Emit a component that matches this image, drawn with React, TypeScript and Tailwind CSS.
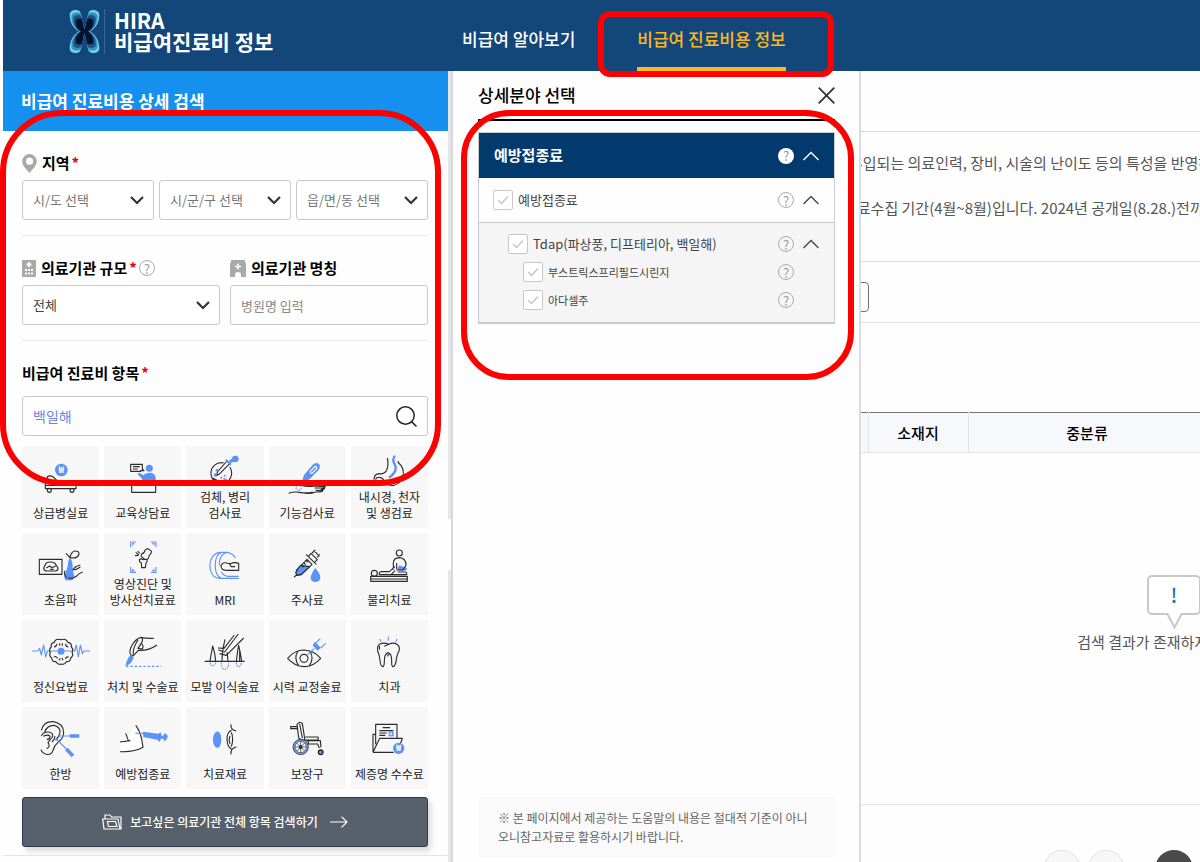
import React from "react";

const INK = "#2b2b2b";
const BLUE = "#5c93f7";

type Category = { name: string[]; viewBox: string; art: React.ReactNode };

const categories: Category[] = [
  {
    name: ["상급병실료"],
    viewBox: "88 48 192 96",
    art: (
      <>
        <circle cx="185" cy="72" r="19" fill={BLUE} stroke="none" />
        <text x="185" y="82" textAnchor="middle" fontSize="28" fontWeight="700" fill="#fff" stroke="none">₩</text>
        <path d="M143 108V92q8-5 18 1l14 14M137 108v20h92v-10H139M137 118h90M229 112v16" />
        <circle cx="149" cy="133" r="6" />
        <circle cx="217" cy="133" r="6" />
      </>
    ),
  },
  {
    name: ["교육상담료"],
    viewBox: "332 48 192 96",
    art: (
      <>
        <path d="M391 55h35v14l5 5h-10v2h-30zM398 62h20M398 69h14" />
        <circle cx="447" cy="67" r="10.5" fill={BLUE} stroke="none" />
        <path d="M411 84l6-4 12 8q6-8 20-8 17 0 17 18v8h-40l-2-9z" fill={BLUE} stroke="none" />
        <path d="M394 104h72v35h-72z" />
      </>
    ),
  },
  {
    name: ["검체, 병리", "검사료"],
    viewBox: "-80 30 192 96",
    art: (
      <>
        <path d="M12 54A31 31 0 1 0 30 66M-20 100q20 14 42 4" />
        <path d="M-10 92l4-12L22 48l8 8L0 86z" fill="#fff" />
        <path d="M18 44l16 15" strokeWidth="5" stroke={BLUE} />
        <path d="M30 50L48 41" stroke={BLUE} strokeWidth="10" />
        <circle cx="47" cy="42" r="10" fill={BLUE} stroke="none" />
        <g fill={BLUE} stroke="none">
          <circle cx="-8" cy="76" r="4" /><circle cx="-13" cy="90" r="5" /><circle cx="5" cy="98" r="3" /><circle cx="15" cy="92" r="3" /><circle cx="14" cy="102" r="3" />
        </g>
      </>
    ),
  },
  {
    name: ["기능검사료"],
    viewBox: "166 48 192 96",
    art: (
      <>
        <path d="M247 105l6-18 26-31q10-9 19-2 6 8-1 18l-29 29z" fill={BLUE} stroke="none" />
        <path d="M272 76l14-15q6 0 5 6l-14 15q-6 0-5-6z" stroke="#fff" />
        <path d="M207 142q16-6 32-3 24 4 40-1M244 118q18 6 38 2l35 2q-4 6-12 5M285 126h30q0 5-12 5M288 133l22 1q-4 5-22 4-18 7-34 3" />
        <circle cx="237" cy="125" r="8" stroke={BLUE} strokeDasharray="4 3" />
      </>
    ),
  },
  {
    name: ["내시경, 천자", "및 생검료"],
    viewBox: "412 30 192 96",
    art: (
      <>
        <path d="M503 39q5 20-2 37-9 13-24 10-14 2-14 18M468 104q2-8 10-7 10 0 15 10 12 17 29 14 24-6 29-31 2-23-14-36l-2-6" />
        <path d="M526 32q-9 12-2 24 8 14 0 26-5 9-16 16" stroke={BLUE} strokeWidth="7" />
        <path d="M530 76l-18 20" stroke={BLUE} strokeWidth="4" />
      </>
    ),
  },
  {
    name: ["초음파"],
    viewBox: "88 309 192 96",
    art: (
      <>
        <path d="M119 340h68v45h-68zM139 352q13-8 27 0l9 14q0 9-9 9h-24q-9 0-10-8zM140 366l10-6 6 5 12-5M152 370h10" />
        <path d="M211 335q-6 6-7 26l-10 32 3 10h22l4-13-4-24q0-23-8-31z" fill={BLUE} stroke="none" />
        <path d="M199 322l12 13q2-16 14-20 13-1 13 9-3 12-18 12-5 0-9-1M242 357q-18 5-22 14 10 1 22-8M249 378q-12 4-18 12-13 10-25 5M196 374q-4 12 4 21" />
      </>
    ),
  },
  {
    name: ["영상진단 및", "방사선치료료"],
    viewBox: "332 291 192 96",
    art: (
      <>
        <path d="M391 307v-16h16M452 291h15v16M391 366v16h16M452 382h15v-16M397 301v-5h5M461 301v-5h-5M397 372v5h5M461 372v5h-5" stroke={BLUE} />
        <path d="M425 326q7-1 9-10 6-8 10-4l4 3q7 2 5 8-8 9-9 17-5 6-12 2l-9-7q-1-6 2-9zM417 344q5-5 10 0 8-3 13 1 2 5-3 9l-2 14h-11l-1-14q-7-4-6-10zM406 322l9 7M404 332l11-1M412 318l6 7" />
      </>
    ),
  },
  {
    name: ["MRI"],
    viewBox: "-80 309 192 96",
    art: (
      <>
        <path d="M24 319H4C-40 319-40 397 0 397h57M24 319q17 4 23 17M5 319C-19 326-20 388 5 397M24 319C0 322-3 350 0 359M5 378q7 13 21 13h31" stroke={BLUE} />
        <path d="M57 352l-9-2q-7-1-15 3l-8-1q-17-6-21 8 1 13 15 13h38zM29 354l6 8h11" />
      </>
    ),
  },
  {
    name: ["주사료"],
    viewBox: "166 309 192 96",
    art: (
      <>
        <path d="M223 394l10-10M230 373l32-33 15 15-32 31-14 2zM259 325l31 30M266 332l8-10 19 19-9 9M282 313l18 18M277 321l10-9M292 334l8-9" />
        <path d="M236 366l7-8 27 4-25 23-13 2-4-7z" fill={BLUE} stroke={INK} />
        <path d="M246 359l5 5M253 351l5 5M260 344l5 5" />
        <path d="M287 366q16 20 15 29-2 13-15 13-14-1-14-13 1-11 14-29z" fill={BLUE} stroke="none" />
      </>
    ),
  },
  {
    name: ["물리치료"],
    viewBox: "412 309 192 96",
    art: (
      <>
        <circle cx="539" cy="321" r="9" />
        <circle cx="464" cy="382" r="9" />
        <path d="M538 358l22 7q5 7-4 9l-23-2z" fill={BLUE} stroke="none" />
        <path d="M453 391h110v15H453zM453 399h110M479 386q-2-8 6-9h24l17-15M526 374l-12 12M479 386h82q2-6-5-8h-22M521 371V350q1-14 18-15 20 1 20 23l-9 14h-20M531 351v18" />
      </>
    ),
  },
  {
    name: ["정신요법료"],
    viewBox: "88 60 192 96",
    art: (
      <>
        <path d="M97 105h18l5-8 5 20 7-30 6 36 5-18h82l5-18 6 36 6-36 6 26 5-8h18" stroke={BLUE} />
        <path d="M184 71q-17-5-20 8-12 2-9 14-9 8-3 16-5 12 4 17 1 12 13 11 6 11 15 7 10 4 16-7 13 1 13-11 10-7 4-17 6-8-2-16 2-12-10-14-5-13-21-8zM163 93q7-1 9-9M197 84q2 8 9 9M163 123q6-4 11 4M197 128q4-7 10-5M180 82v7M188 82v7M178 133l4-6M190 133l-3-7" />
        <circle cx="184" cy="106" r="10.5" fill={BLUE} stroke="none" />
      </>
    ),
  },
  {
    name: ["처치 및 수술료"],
    viewBox: "332 60 192 96",
    art: (
      <>
        <path d="M460 67q-26 0-38-3-15 3-27 24-9 16-5 26 7 10 15-1l9-10q30 2 56-16M422 64q8 5 2 16l-11 17 13 2q5-11-3-17M413 72q-16 24-14 43" />
        <path d="M390 116l10 6q-4 18-16 24l-8 5q0-15 14-35z" fill={BLUE} stroke="none" />
        <path d="M377 151h106" stroke={BLUE} strokeDasharray="7 6" />
      </>
    ),
  },
  {
    name: ["모발 이식술료"],
    viewBox: "-80 60 192 96",
    art: (
      <>
        <path d="M-45 136H75M-29 136q3-20 8-46 8 25 9 46M7 136q0-30 9-66M25 136q-1-14-3-27M-4 102l19 6L56 54M0 113l20 5L72 66M-5 96l18 1L44 57M50 136q3-28 7-48 6 24 9 48M60 104v31" />
        <path d="M-29 140q1 9 8 9t9-9M5 140q0 20 10 20 12 0 12-20M50 140q1 12 7 12t8-12" stroke={BLUE} strokeDasharray="5 3" />
      </>
    ),
  },
  {
    name: ["시력 교정술료"],
    viewBox: "166 60 192 96",
    art: (
      <>
        <path d="M204 127q21-25 49-25 30 1 50 25-22 25-50 25-28-1-49-25zM235 105q-14 22 2 44M270 105q15 21-1 44" />
        <circle cx="253" cy="127" r="12" />
        <path d="M264 116l20-19" stroke={BLUE} />
        <path d="M281 88l5-8 15 15-7 7z" fill={BLUE} stroke={BLUE} />
        <path d="M287 82l15-14M303 96l15-14" stroke={BLUE} />
      </>
    ),
  },
  {
    name: ["치과"],
    viewBox: "412 60 192 96",
    art: (
      <>
        <path d="M481 84q12-6 26 1 14-7 25 0 10 7 6 20-7 12-9 33-4 15-10 14-4-4-3-16 0-23-9-26-13 2-13 25 0 15-4 17-8-1-9-19-2-16-7-28-3-16 7-21zM494 91l13-6M480 90q-2 6 0 11M504 121q2-8 7-6" />
        <path d="M480 69l4 8M506 62v12M532 69l-4 8" stroke={BLUE} />
      </>
    ),
  },
  {
    name: ["한방"],
    viewBox: "88 321 192 96",
    art: (
      <>
        <path d="M125 343q7-28 36-26 31 5 31 34-1 17-17 28-11 9-15 24-5 15-20 12-14-5-16-14M135 347q9-20 28-19 20 5 18 22-2 11-13 22M125 360q6-13 21-12 17 2 12 15l-13 17q9 12-4 18M131 361q16-7 20 0-1 9-9 10M166 360q-1 12-9 18" />
        <circle cx="179" cy="360" r="3.5" fill={BLUE} stroke="none" />
        <circle cx="171" cy="370" r="3.5" fill={BLUE} stroke="none" />
        <path d="M179 360h34M171 370l29 29" stroke={BLUE} />
        <path d="M210 360h29M200 399l20 21" stroke={BLUE} strokeWidth="11" strokeLinecap="butt" />
      </>
    ),
  },
  {
    name: ["예방접종료"],
    viewBox: "332 321 192 96",
    art: (
      <>
        <path d="M406 328q12 15 18 41l4 27q-22 12-67 12l-2-30 17-4z" fill="#fff" stroke="none" />
        <path d="M406 328q12 15 18 41l4 25q-26 15-68 13M359 378l31-4M376 352l8 21" />
        <path d="M405 352h24" stroke={BLUE} />
        <path d="M428 347l45 6 8-4 3 10h5l3-7q10 2 10 11-2 9-10 13l-3-8h-7l-4 10-7-7-42-8z" fill={BLUE} stroke="none" />
      </>
    ),
  },
  {
    name: ["치료재료"],
    viewBox: "-80 321 192 96",
    art: (
      <>
        <path d="M-7 346q12 3 12 25-1 22-12 25-13-5-13-25t13-25z" fill={BLUE} stroke="none" />
        <path d="M34 325q-2 17 16 20M34 415q-2-18 16-22M36 342q-15 7-14 29 1 21 14 29M35 349q8 20 0 43M31 360q-5 11 0 23" />
      </>
    ),
  },
  {
    name: ["보장구"],
    viewBox: "166 321 192 96",
    art: (
      <>
        <path d="M213 332h20v6h-20zM232 325l7-6 9 3 7 46q0 6-9 4l-9-6zM240 324l8 42M257 363h37q5 5-2 9h-40M259 374h43l2 20M266 384h28l5 12M266 374v12" />
        <circle cx="243" cy="393" r="21" stroke={BLUE} strokeWidth="5" />
        <circle cx="243" cy="393" r="23" strokeWidth="2" />
        <circle cx="243" cy="393" r="17" strokeWidth="2" />
        <circle cx="243" cy="393" r="4" />
        <path d="M243 376v34M226 393h34M231 381l24 24M255 381l-24 24" strokeWidth="2" />
        <circle cx="303" cy="409" r="7" fill={BLUE} strokeWidth="4" />
      </>
    ),
  },
  {
    name: ["제증명 수수료"],
    viewBox: "412 321 192 96",
    art: (
      <>
        <path d="M468 385V325h64v42M460 409V355h8M460 409l20-42h68l-7 20M460 409h62M489 335h22M479 344h42M479 351h22M479 358h18" />
        <rect x="507" y="347" width="15" height="14" fill={BLUE} stroke="none" />
        <path d="M514 350v8M510 354h8" stroke="#fff" />
        <circle cx="537" cy="397" r="17" fill={BLUE} stroke="none" />
        <text x="537" y="406" textAnchor="middle" fontSize="26" fontWeight="700" fill="#fff" stroke="none">₩</text>
      </>
    ),
  },
];

function Logo() {
  const lobe = "M255 101C226 94 210 72 210 44C210 28 234 26 241 34C247 44 247 70 257 90Z";
  const layers: [string, number][] = [
    ["#7ccbf0", 1],
    ["#2d94c4", 0.88],
    ["#18557f", 0.76],
    ["#04122f", 0.6],
  ];
  return (
    <svg viewBox="208 28 94 134" className="h-[45px] w-[31px]" aria-hidden="true">
      {layers.map(([fill, k]) => (
        <g key={fill} fill={fill}>
          {[[1, 1], [-1, 1], [1, -1], [-1, -1]].map(([sx, sy]) => (
            <path key={`${sx}${sy}`} d={lobe} transform={`translate(255 95) scale(${sx * k} ${sy * k}) translate(-255 -95)`} />
          ))}
        </g>
      ))}
    </svg>
  );
}

function Chevron({ up = false, className = "" }: { up?: boolean; className?: string }) {
  return (
    <svg viewBox="0 0 16 10" className={className} fill="none" stroke="currentColor" aria-hidden="true">
      <path d={up ? "M0.5 9L8 1.5L15.5 9" : "M2 2l6 6 6-6"} strokeWidth={up ? 1.3 : 2.2} />
    </svg>
  );
}

function Help({ solid = false }: { solid?: boolean }) {
  return (
    <button
      type="button"
      aria-label="도움말"
      className={
        solid
          ? "flex size-4 shrink-0 items-center justify-center rounded-full bg-white text-[13px] leading-none text-[#8a98a8]"
          : "flex size-4 shrink-0 items-center justify-center rounded-full border border-[#aaaaaa] text-[13px] leading-none text-[#999999]"
      }
    >
      ?
    </button>
  );
}

function Required() {
  return <span className="ml-0.5 text-[#e60012]">*</span>;
}

function SelectBox({ label, text, id, dark = false }: { label?: string; text: string; id?: string; dark?: boolean }) {
  return (
    <div className="relative flex-1">
      <select
        id={id}
        aria-label={label}
        className={`h-10 w-full appearance-none rounded-[3px] border border-[#c9c9c9] bg-white pl-2.5 text-[13px] ${dark ? "text-[#444444]" : "text-[#777777]"}`}
      >
        <option>{text}</option>
      </select>
      <Chevron className="pointer-events-none absolute top-[15px] right-[9px] h-2.5 w-4 text-[#333333]" />
    </div>
  );
}

function Option({ label, className, expandable = false }: { label: string; className: string; expandable?: boolean }) {
  return (
    <div className={`flex items-center pr-[15px] ${className}`}>
      <label className="flex flex-1 items-center gap-[5px]">
        <span className="relative flex size-5">
          <input type="checkbox" className="size-5 appearance-none rounded-xs border border-[#c8c8c8] bg-white" />
          <svg viewBox="0 0 20 20" className="pointer-events-none absolute inset-0 size-5" fill="none" stroke="#c4c4c4" strokeWidth="1.4">
            <path d="M5 10l3.5 3.5L15 6.5" />
          </svg>
        </span>
        {label}
      </label>
      <div className="flex w-[41px] items-center gap-[9px]">
        <Help />
        {expandable && (
          <button type="button" aria-label="접기">
            <Chevron up className="h-2.5 w-4 text-[#444444]" />
          </button>
        )}
      </div>
    </div>
  );
}

function Sidebar() {
  return (
    <aside className="w-[445px] shrink-0">
      <h2 className="flex h-[60px] items-center bg-[#1590ef] pl-[18px] text-[17px] font-bold text-white">비급여 진료비용 상세 검색</h2>
      <form className="pt-5 pr-5 pl-[19px]">
        <div className="flex h-6 items-center text-[15px] font-bold text-black">
          <svg viewBox="0 0 15 19" className="mr-[5px] h-[19px] w-[15px]" fill="#a9a9a9" aria-hidden="true">
            <path fillRule="evenodd" d="M7.500 0A7.300 7.300 0 0 0 .2 7.300C.2 11.500 4 15 7.500 19C11 15 14.800 11.500 14.800 7.300A7.300 7.300 0 0 0 7.500 0ZM7.500 3.600a3.600 3.600 0 1 1 0 7.200a3.600 3.600 0 0 1 0-7.200Z" />
          </svg>
          지역
          <Required />
        </div>
        <div className="mt-[5px] flex gap-[5px]">
          <SelectBox label="시/도" text="시/도 선택" />
          <SelectBox label="시/군/구" text="시/군/구 선택" />
          <SelectBox label="읍/면/동" text="읍/면/동 선택" />
        </div>
        <hr className="mt-[15px] border-[#e8e8e8]" />
        <div className="mt-5 flex gap-2.5">
          <div className="flex flex-1 flex-col gap-[5px]">
            <div className="flex h-6 items-center text-[15px] font-bold text-black">
              <svg viewBox="0 0 14 17" className="mr-[5px] h-[17px] w-3.5" aria-hidden="true">
                <rect width="14" height="17" rx="1" fill="#a9a9a9" />
                <path d="M7 2v5M4.500 4.500h5M3 10h2M6 10h2M9 10h2M3 13.500h2M6 13.500h2M9 13.500h2" stroke="#fff" strokeWidth="1.800" />
              </svg>
              <label htmlFor="scale">의료기관 규모<Required /></label>
              <span className="ml-0.5 flex font-normal"><Help /></span>
            </div>
            <SelectBox id="scale" text="전체" dark />
          </div>
          <div className="flex flex-1 flex-col gap-[5px]">
            <label htmlFor="hospital" className="flex h-6 items-center text-[15px] font-bold text-black">
              <svg viewBox="0 0 16 17" className="mr-[5px] h-[17px] w-4" aria-hidden="true">
                <path d="M1 0h14v3h1v14h-5v-2a3 3 0 0 0-6 0v2H0V3h1z" fill="#a9a9a9" />
                <path d="M8 3.500v6M5 6.500h6" stroke="#fff" strokeWidth="1.600" />
              </svg>
              의료기관 명칭
            </label>
            <input id="hospital" placeholder="병원명 입력" className="h-10 w-full rounded-[3px] border border-[#c9c9c9] pl-2.5 text-[13px] placeholder:text-[#888888]" />
          </div>
        </div>
        <hr className="mt-[15px] border-[#e8e8e8]" />
        <label htmlFor="item" className="mt-5 flex h-6 items-center text-[15px] font-bold text-black">
          비급여 진료비 항목
          <Required />
        </label>
        <div className="mt-[11px] flex h-10 items-center rounded-[3px] border border-[#c9c9c9]">
          <input id="item" defaultValue="백일해" className="h-full min-w-0 flex-1 pl-2.5 text-sm text-[#6b86e0] outline-none" />
          <button type="button" aria-label="검색" className="mr-2.5">
            <svg viewBox="0 0 21 21" className="size-[21px]" fill="none" stroke="#222222" strokeWidth="1.500">
              <circle cx="9.500" cy="9.500" r="8.700" />
              <path d="M15.600 15.600L20.500 20.500" />
            </svg>
          </button>
        </div>
        <div className="mt-2.5 grid grid-cols-5 gap-[5px]">
          {categories.map((c) => (
            <button key={c.name[0]} type="button" className="flex h-[82px] flex-col items-center justify-end bg-[#f7f7f7] pb-[7px] text-xs leading-4 text-[#222222]">
              <svg
                viewBox={c.viewBox}
                className={`h-8 w-16 overflow-visible ${c.name.length > 1 ? "mb-0.5" : "mb-[11px]"}`}
                fill="none"
                stroke={INK}
                strokeWidth="3.4"
                strokeLinejoin="round"
                aria-hidden="true"
              >
                {c.art}
              </svg>
              {c.name.map((line) => (
                <span key={line} className="whitespace-nowrap">{line}</span>
              ))}
            </button>
          ))}
        </div>
        <button type="button" className="mt-2 flex h-[50px] w-full items-center justify-center rounded-[3px] border border-[#2c3a4c] bg-[#58606b] text-xs font-medium text-white shadow-[3px_4px_6px_rgba(0,0,0,0.15)]">
          <svg viewBox="0 0 20 16" className="mr-2 h-4 w-5" fill="none" stroke="#ffffff" strokeWidth="1.200" aria-hidden="true">
            <path d="M3 5V1h5l1.500 2H19v12H2L.7 5H16l2 10M5.500 7.500h8l1.500 5H6.500z" />
          </svg>
          보고싶은 의료기관 전체 항목 검색하기
          <svg viewBox="0 0 18 12" className="ml-3 h-3 w-[18px]" fill="none" stroke="#ffffff" strokeWidth="1.200" aria-hidden="true">
            <path d="M0 6h17M11.500 .6L17 6l-5.500 5.400" />
          </svg>
        </button>
      </form>
      <hr className="mt-2 border-[#e5e5e5]" />
    </aside>
  );
}

function DetailPanel() {
  return (
    <section className="flex w-[408px] shrink-0 flex-col border-r-2 border-[#dcdcde] pr-6 pl-[25px]">
      <div className="flex h-[50px] items-center justify-between border-b-2 border-black">
        <h2 className="text-[17px] font-medium text-black">상세분야 선택</h2>
        <button type="button" aria-label="닫기">
          <svg viewBox="0 0 17 17" className="size-[17px]" stroke="#333333" strokeWidth="1.800">
            <path d="M.7 .7l15.600 15.600M16.300 .7L.7 16.300" />
          </svg>
        </button>
      </div>
      <div className="mt-[11px] border border-b-2 border-[#c9cbce] text-[13px] text-[#444444]">
        <div className="flex h-[45px] items-center bg-[#023a6e] pr-[15px] pl-[15px] text-white">
          <h3 className="flex-1 text-[15px] font-bold">예방접종료</h3>
          <div className="flex w-[41px] items-center gap-[9px]">
            <Help solid />
            <button type="button" aria-label="접기">
              <Chevron up className="h-2.5 w-4" />
            </button>
          </div>
        </div>
        <Option label="예방접종료" className="h-11 pl-3.5" expandable />
        <div className="border-t border-[#c9cbce] bg-[#f5f5f5] pt-[7px] pb-2">
          <Option label="Tdap(파상풍, 디프테리아, 백일해)" className="h-7 pl-[29px]" expandable />
          <Option label="부스트릭스프리필드시린지" className="h-7 pl-11 text-[11px]" />
          <Option label="아다셀주" className="h-7 pl-11 text-[11px]" />
        </div>
      </div>
      <p className="mt-auto mb-[5px] bg-[#fafafa] px-5 py-[11px] text-xs leading-[19px] text-[#666666]">
        ※ 본 페이지에서 제공하는 도움말의 내용은 절대적 기준이 아니
        <br />
        오니참고자료로 활용하시기 바랍니다.
      </p>
    </section>
  );
}

function Results() {
  return (
    <main className="min-w-0 flex-1 overflow-hidden">
      <div className="-ml-[18px] w-[662px] pt-[60px] text-[15px] text-[#555555]">
        <div className="border-y border-[#d3dde4] pt-2 pb-[31px] leading-[45px] whitespace-nowrap">
          <p className="pl-1.5">투입되는 의료인력, 장비, 시술의 난이도 등의 특성을 반영하여</p>
          <p>자료수집 기간(4월~8월)입니다. 2024년 공개일(8.28.)전까지</p>
        </div>
        <div className="border-b border-[#e3e3e3] pt-5 pb-2.5">
          <div className="h-[30px] w-[26px] rounded-sm border border-[#6b7280]" />
        </div>
        <table className="mt-[89px] w-full table-fixed border-collapse">
          <colgroup>
            <col className="w-[25px]" />
            <col className="w-[100px]" />
            <col className="w-[238px]" />
            <col />
          </colgroup>
          <thead>
            <tr className="h-10 border-t border-b border-t-[#777777] border-b-[#e3e3e3] bg-[#f6f8fb] text-black">
              <th className="border-r border-[#e3e3e3]" />
              <th className="border-r border-[#e3e3e3] pt-0.5 font-medium">소재지</th>
              <th className="border-r border-[#e3e3e3] pt-0.5 font-medium">중분류</th>
              <th />
            </tr>
          </thead>
          <tbody>
            <tr className="h-[352px] border-b border-[#e3e3e3]">
              <td colSpan={4} className="pt-[122px] text-center align-top leading-[26px]">
                <div className="relative mx-auto h-[54px] w-[54px]">
                  <svg viewBox="0 0 54 54" className="size-full" fill="#fff" stroke="#c8c8c8" strokeWidth="2" aria-hidden="true">
                    <path d="M5 1h44a4 4 0 0 1 4 4v30a4 4 0 0 1-4 4H34.500L27.500 52.500L20.500 39H5a4 4 0 0 1-4-4V5a4 4 0 0 1 4-4Z" />
                  </svg>
                  <span className="absolute inset-x-0 top-0 text-xl leading-10 font-medium text-[#1f6fc9]">!</span>
                </div>
                검색 결과가 존재하지 않습니다.
              </td>
            </tr>
          </tbody>
        </table>
        <nav aria-label="페이지" className="mt-[45px] flex justify-center gap-[30px]">
          <div className="flex gap-1.5">
            <button type="button" aria-label="처음" className="size-[38px] rounded-full border border-[#e0e0e0] bg-[#f7f7f7]" />
            <button type="button" aria-label="이전" className="size-[38px] rounded-full border border-[#e0e0e0] bg-[#f7f7f7]" />
          </div>
          <button type="button" className="size-[38px] rounded-full bg-[#4a4a4a] text-white">1</button>
          <div className="flex gap-1.5">
            <button type="button" aria-label="다음" className="size-[38px] rounded-full border border-[#e0e0e0] bg-[#f7f7f7]" />
            <button type="button" aria-label="마지막" className="size-[38px] rounded-full border border-[#e0e0e0] bg-[#f7f7f7]" />
          </div>
        </nav>
      </div>
    </main>
  );
}

export default function App() {
  return (
    <div className="relative flex h-screen flex-col overflow-hidden bg-[#fefefe] pl-[3px] font-['Noto_Sans_CJK_KR','Noto_Sans',sans-serif]">
      <header className="flex h-[71px] shrink-0 bg-[#13477a] text-white">
        <div className="flex w-[459px] shrink-0 items-center pb-[9px] pl-[66px]">
          <Logo />
          <div className="ml-1 h-[45px] w-px bg-[#3a6794]" />
          <div className="ml-[9px] text-[21px] leading-[21px] font-bold">
            <div>HIRA</div>
            <div>비급여진료비 정보</div>
          </div>
        </div>
        <nav className="flex gap-[62px] text-[17px] font-medium">
          <a href="#about" className="flex items-center pt-[7px]">비급여 알아보기</a>
          <a href="#cost" className="flex items-center border-b-4 border-[#ffb81c] pt-[11px] text-[#ffb81c]">비급여 진료비용 정보</a>
        </nav>
      </header>
      <div className="flex min-h-0 flex-1">
        <Sidebar />
        <div className="flex shrink-0">
          <div className="flex w-[3px] flex-col bg-[#e6e6e8] pt-[448px]">
            <div className="h-[51px] bg-white" />
          </div>
          <div className="w-0.5 bg-[#d8d8dc]" />
        </div>
        <DetailPanel />
        <Results />
      </div>
      <div className="pointer-events-none absolute top-[110px] left-0 h-[376px] w-[441px] rounded-[62px] border-[6px] border-[#ff0000]" />
      <div className="pointer-events-none absolute top-[110px] left-[461px] h-[270px] w-[393px] rounded-[48px] border-[6px] border-[#ff0000]" />
      <div className="pointer-events-none absolute top-[11px] left-[598px] h-[66px] w-[236px] rounded-xl border-[6px] border-[#ff0000]" />
    </div>
  );
}
